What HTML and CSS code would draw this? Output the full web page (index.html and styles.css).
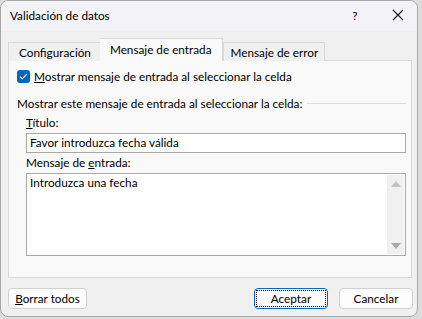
FILE: index.html
```html
<!DOCTYPE html>
<html lang="es">
<head>
<meta charset="utf-8">
<title>Validación de datos</title>
<link rel="stylesheet" href="styles.css">
</head>
<body>
<div class="window">
  <div class="titlebar">
    <span class="title">Validación de datos</span>
    <span class="help">?</span>
    <span class="close"><svg width="12" height="12" viewBox="0 0 12 12"><path d="M1 1 L11 11 M11 1 L1 11" stroke="#1a1a1a" stroke-width="1.1" fill="none"/></svg></span>
  </div>
  <div class="content">
    <div class="tabs">
      <div class="tab">Configuración</div>
      <div class="tab active">Mensaje de entrada</div>
      <div class="tab last">Mensaje de error</div>
    </div>
    <div class="panel">
      <label class="check-row">
        <span class="checkbox"><svg width="9" height="7" viewBox="0 0 9 7"><path d="M1 3.6 L3.3 5.8 L8 1" stroke="#fff" stroke-width="1.1" fill="none"/></svg></span>
        <span><u>M</u>ostrar mensaje de entrada al seleccionar la celda</span>
      </label>
      <div class="group-title">
        <span>Mostrar este mensaje de entrada al seleccionar la celda:</span>
        <span class="rule"></span>
      </div>
      <div class="field-label"><u>T</u>ítulo:</div>
      <div class="input">Favor introduzca fecha válida</div>
      <div class="field-label second">Mensaje de <u>e</u>ntrada:</div>
      <div class="textarea">
        <div class="text">Introduzca una fecha</div>
        <div class="scrollbar">
          <svg width="10" height="6" viewBox="0 0 10 6"><path d="M0 6 L5 0 L10 6 Z" fill="#c2c2c2"/></svg>
          <svg width="10" height="6" viewBox="0 0 10 6"><path d="M0 0 L5 6 L10 0 Z" fill="#a8a8a8"/></svg>
        </div>
      </div>
    </div>
    <div class="buttons">
      <div class="btn"><u>B</u>orrar todos</div>
      <div class="spacer"></div>
      <div class="btn primary"><span class="focus">Aceptar</span></div>
      <div class="btn">Cancelar</div>
    </div>
  </div>
</div>
</body>
</html>
```
FILE: styles.css
```css
html, body {
  margin: 0;
  padding: 0;
}
body {
  background: #dcdcdc;
  width: 422px;
  height: 319px;
  overflow: hidden;
  font-family: Lato, "Liberation Sans", sans-serif;
  font-size: 11.75px;
  color: #000;
}
.window {
  width: 418px;
  height: 317px;
  box-sizing: border-box;
  border: 1px solid #a8a8a8;
  border-radius: 8px;
  background: #f0f0f0;
  display: flex;
  flex-direction: column;
  overflow: hidden;
}
.titlebar {
  height: 30px;
  flex: none;
  background: #f3f2f7;
  display: flex;
  align-items: center;
  padding-left: 9px;
}
.title {
  flex: 1;
  margin-top: -2px;
}
.help {
  width: 20px;
  text-align: center;
  margin-right: 27px;
  margin-top: -2px;
}
.close {
  width: 12px;
  height: 12px;
  margin-right: 13px;
  display: flex;
  margin-top: -2px;
}
.content {
  flex: 1;
  padding: 7px 5px 0 7px;
  display: flex;
  flex-direction: column;
}
.tabs {
  display: flex;
  align-items: flex-end;
  height: 23px;
  position: relative;
  z-index: 1;
  margin-bottom: -1px;
}
.tab {
  height: 19px;
  box-sizing: border-box;
  border: 1px solid #d9d9d9;
  border-bottom: none;
  background: #f0f0f0;
  padding: 0 9px 0 10px;
  line-height: 19px;
}
.tab.active {
  height: 23px;
  background: #f9f9f9;
  line-height: 22px;
  padding: 0 10px;
  border-left: none;
}
.tab.last {
  padding: 0 6px 0 7px;
}
.tab:first-child {
  border-right: none;
}
.panel {
  height: 218px;
  box-sizing: border-box;
  border: 1px solid #d9d9d9;
  background: #f9f9f9;
  padding: 8px 5px 0 8px;
}
.check-row {
  display: flex;
  align-items: center;
  height: 14px;
}
.checkbox {
  width: 13px;
  height: 13px;
  border-radius: 3px;
  background: #0067c0;
  display: flex;
  align-items: center;
  justify-content: center;
  margin-right: 4px;
}
.group-title {
  display: flex;
  align-items: center;
  margin-top: 12px;
  height: 16px;
}
.rule {
  flex: 1;
  height: 1px;
  background: #dcdcdc;
  margin-left: 5px;
}
.field-label {
  margin-left: 9px;
  margin-top: 4px;
  height: 16px;
  line-height: 16px;
}
.field-label.second {
  margin-top: 2px;
}
.input {
  margin-left: 9px;
  height: 20px;
  box-sizing: border-box;
  border: 1px solid #a8a8a8;
  background: #fff;
  padding-left: 3px;
  line-height: 18px;
  margin-top: 2px;
}
.textarea {
  margin-left: 9px;
  margin-top: 2px;
  height: 83px;
  box-sizing: border-box;
  border: 1px solid #a8a8a8;
  background: #fff;
  display: flex;
}
.textarea .text {
  flex: 1;
  padding: 0 0 0 3px;
  line-height: 18px;
}
.scrollbar {
  width: 17px;
  margin: 1px 1px 1px 0;
  background: #f0f0f0;
  display: flex;
  flex-direction: column;
  justify-content: space-between;
  align-items: center;
  padding: 6px 0 5px;
}
.buttons {
  display: flex;
  margin-top: 10px;
  margin-right: -1px;
}
.spacer { flex: 1; }
.btn {
  width: 79px;
  height: 21px;
  box-sizing: border-box;
  border: 1px solid #d0d0d0;
  border-radius: 4px;
  background: #fdfdfd;
  text-align: center;
  line-height: 19px;
}
.btn.primary {
  width: 74px;
  border: 1px solid #0067c0;
  margin-right: 11px;
  padding: 1px;
  line-height: 15px;
}
.btn.primary .focus {
  display: block;
  height: 17px;
  box-sizing: border-box;
  border: 1px dotted #000;
}
.btn:last-child {
  width: 74px;
}
```
